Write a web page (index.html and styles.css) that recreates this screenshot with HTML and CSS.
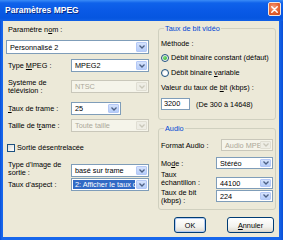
FILE: index.html
```html
<!DOCTYPE html>
<html>
<head>
<meta charset="utf-8">
<link rel="stylesheet" href="styles.css">
</head>
<body>
<div class="window">
  <div class="titlebar">
    <span class="title">Paramètres MPEG</span>
    <span class="close"><svg width="7" height="7" viewBox="0 0 7 7"><path d="M0.8 0.8L6.2 6.2M6.2 0.8L0.8 6.2" stroke="#fff" stroke-width="1.5" stroke-linecap="round"/></svg></span>
  </div>
  <div class="client">
    <div class="left">
      <div class="lbl l-nom">Paramètre n<u>o</u>m :</div>
      <div class="combo c-nom"><span class="val">Personnalisé 2</span><span class="arr"><svg width="6" height="4" viewBox="0 0 6 4"><path d="M0.5 0.5L3 3L5.5 0.5" fill="none" stroke="#4d6185" stroke-width="1.3"/></svg></span></div>

      <div class="row r-mpeg">
        <div class="lbl rl">Type <u>M</u>PEG :</div>
        <div class="combo wide"><span class="val">MPEG2</span><span class="arr"><svg width="6" height="4" viewBox="0 0 6 4"><path d="M0.5 0.5L3 3L5.5 0.5" fill="none" stroke="#4d6185" stroke-width="1.3"/></svg></span></div>
      </div>
      <div class="row r-tv">
        <div class="lbl rl two">Système de<br>télévision :</div>
        <div class="combo wide disabled"><span class="val">NTSC</span><span class="arr"><svg width="6" height="4" viewBox="0 0 6 4"><path d="M0.5 0.5L3 3L5.5 0.5" fill="none" stroke="#c9c7ba" stroke-width="1.3"/></svg></span></div>
      </div>
      <div class="row r-trame">
        <div class="lbl rl"><u>T</u>aux de trame :</div>
        <div class="combo narrow"><span class="val">25</span><span class="arr"><svg width="6" height="4" viewBox="0 0 6 4"><path d="M0.5 0.5L3 3L5.5 0.5" fill="none" stroke="#4d6185" stroke-width="1.3"/></svg></span></div>
      </div>
      <div class="row r-taille">
        <div class="lbl rl">Taille de t<u>r</u>ame :</div>
        <div class="combo wide disabled"><span class="val">Toute taille</span><span class="arr"><svg width="6" height="4" viewBox="0 0 6 4"><path d="M0.5 0.5L3 3L5.5 0.5" fill="none" stroke="#c9c7ba" stroke-width="1.3"/></svg></span></div>
      </div>
      <div class="checkrow">
        <span class="check"></span><span class="lbl">Sortie désentrelacée</span>
      </div>
      <div class="row r-type">
        <div class="lbl rl two up">Type d'image de<br>sortie :</div>
        <div class="combo wide"><span class="val">basé sur trame</span><span class="arr"><svg width="6" height="4" viewBox="0 0 6 4"><path d="M0.5 0.5L3 3L5.5 0.5" fill="none" stroke="#4d6185" stroke-width="1.3"/></svg></span></div>
      </div>
      <div class="row r-aspect">
        <div class="lbl rl">Taux d'aspect :</div>
        <div class="combo wide"><span class="val sel">2: Afficher le taux d</span><span class="arr"><svg width="6" height="4" viewBox="0 0 6 4"><path d="M0.5 0.5L3 3L5.5 0.5" fill="none" stroke="#4d6185" stroke-width="1.3"/></svg></span></div>
      </div>
    </div>

    <div class="right">
      <fieldset class="grp g-video">
        <legend>Taux de bit vidéo</legend>
        <div class="lbl g-meth">Méthode :</div>
        <div class="radiorow r1"><span class="radio on"></span><span class="lbl">Débit binaire constant (défaut)</span></div>
        <div class="radiorow r2"><span class="radio"></span><span class="lbl">Débit binaire <u>v</u>ariable</span></div>
        <div class="lbl g-val">Valeur du taux de <u>b</u>it (kbps) :</div>
        <div class="inrow">
          <span class="input">3200</span><span class="lbl range">(De 300 à 14648)</span>
        </div>
      </fieldset>

      <fieldset class="grp g-audio">
        <legend>Audio</legend>
        <div class="arow a-fmt">
          <div class="lbl al">Format Audio :</div>
          <div class="combo afmt disabled"><span class="val">Audio MPEG</span><span class="arr"><svg width="6" height="4" viewBox="0 0 6 4"><path d="M0.5 0.5L3 3L5.5 0.5" fill="none" stroke="#c9c7ba" stroke-width="1.3"/></svg></span></div>
        </div>
        <div class="arow a-mode">
          <div class="lbl al">Mo<u>d</u>e :</div>
          <div class="combo acmb"><span class="val">Stéréo</span><span class="arr"><svg width="6" height="4" viewBox="0 0 6 4"><path d="M0.5 0.5L3 3L5.5 0.5" fill="none" stroke="#4d6185" stroke-width="1.3"/></svg></span></div>
        </div>
        <div class="arow2 a-ech">
          <div class="lbl al two2">Taux<br>échantillon :</div>
          <div class="combo acmb c-ech"><span class="val">44100</span><span class="arr"><svg width="6" height="4" viewBox="0 0 6 4"><path d="M0.5 0.5L3 3L5.5 0.5" fill="none" stroke="#4d6185" stroke-width="1.3"/></svg></span></div>
        </div>
        <div class="arow2 a-bit">
          <div class="lbl al two2">Taux de bit<br>(kbps) :</div>
          <div class="combo acmb c-bit"><span class="val">224</span><span class="arr"><svg width="6" height="4" viewBox="0 0 6 4"><path d="M0.5 0.5L3 3L5.5 0.5" fill="none" stroke="#4d6185" stroke-width="1.3"/></svg></span></div>
        </div>
      </fieldset>

      <div class="buttons">
        <span class="btn ok">OK</span>
        <span class="btn cancel"><u>A</u>nnuler</span>
      </div>
    </div>
  </div>
</div>
</body>
</html>
```

FILE: styles.css
```css
* { box-sizing: border-box; }
html, body { margin: 0; padding: 0; }
body {
  width: 283px;
  height: 240px;
  overflow: hidden;
  font-family: "Liberation Sans", Arial, sans-serif;
  font-size: 7.3px;
  color: #000;
  background: #0a5ae6;
}
u { text-decoration: underline; text-underline-offset: 1px; }

.window {
  width: 283px;
  height: 240px;
  display: flex;
  flex-direction: column;
  padding: 0 4px 3px 3px;
  background: linear-gradient(90deg, #0a4fd6 0px, #1767ec 2px, #1767ec 279px, #0a4fd6 283px);
}
.titlebar {
  height: 21px;
  margin: 0 -4px 0 -3px;
  padding: 0 5px 0 5px;
  display: flex;
  align-items: center;
  justify-content: space-between;
  background: linear-gradient(#3b8cf7 0px, #0f62ea 3px, #0a5ae6 10px, #0656e0 18px, #1160e6 21px);
}
.title {
  color: #fff;
  font-weight: bold;
  font-size: 8.5px;
  text-shadow: 1px 1px 0 #0a2c86;
  margin-top: -1px;
}
.close {
  width: 13px;
  height: 14px;
  margin-top: -3px;
  margin-right: -3px;
  border: 1px solid #f2e6e0;
  border-radius: 2px;
  background: radial-gradient(circle at 40% 35%, #f59a7a 0%, #e4622f 55%, #c8421c 100%);
  display: flex;
  align-items: center;
  justify-content: center;
}

.client {
  flex: 1;
  background: #ece9d8;
  display: flex;
  padding: 0 3px 0 3px;
}
.left {
  width: 143px;
  display: flex;
  flex-direction: column;
}
.right {
  width: 118px;
  margin-left: 9px;
  display: flex;
  flex-direction: column;
}
.lbl { line-height: 9px; white-space: nowrap; }
.lbl.two { line-height: 7.5px; }
.lbl.two2 { line-height: 8px; }

.l-nom { margin-top: 4px; padding-left: 2px; }

.combo {
  height: 13px;
  display: flex;
  align-items: stretch;
  background: #fff;
  border: 1px solid #7f9db9;
  padding: 1px;
}
.combo .val {
  flex: 1;
  padding-left: 2px;
  line-height: 9px;
  display: flex;
  align-items: center;
  white-space: nowrap;
  overflow: hidden;
}
.combo .val.sel {
  background: #316ac5;
  color: #fff;
  margin-right: 1px;
}
.combo .arr {
  width: 11px;
  flex: none;
  border-radius: 1px;
  background: linear-gradient(#d5e2fc, #b6cdf9);
  border: 1px solid #b4c8f6;
  display: flex;
  align-items: center;
  justify-content: center;
}
.combo.disabled { background: #f5f4ea; border-color: #c9c7ba; }
.combo.disabled .val { color: #aca899; }
.combo.disabled .arr { background: #eeede5; border-color: #e0ded3; }

.c-nom { height: 14px; margin-top: 6px; }

.row {
  display: flex;
  align-items: center;
  height: 13px;
}
.rl { width: 65px; padding-left: 2px; }
.combo.wide { width: 78px; }
.combo.narrow { width: 50px; }
.r-mpeg { margin-top: 5px; }
.r-tv { margin-top: 8px; }
.r-trame { margin-top: 9px; }
.r-taille { margin-top: 4px; }
.checkrow {
  display: flex;
  align-items: center;
  height: 9px;
  margin-top: 11px;
  padding-left: 1px;
}
.check {
  width: 8px;
  height: 8px;
  border: 1px solid #1c5180;
  background: linear-gradient(135deg, #dcdcd7, #fff);
  margin-right: 2px;
}
.r-type { margin-top: 12px; }
.up { margin-top: -4px; line-height: 8px; }
.r-aspect { margin-top: 1px; }

.grp {
  margin: 0;
  padding: 0 2px 0 2px;
  border: 1px solid #d0d0bf;
  border-radius: 3px;
  min-width: 0;
}
.grp legend {
  padding: 0 1px;
  margin-left: 3px;
  color: #0046d5;
  line-height: 9px;
}
.g-video { margin-top: 3px; height: 96px; }
.g-meth { margin-top: 6px; }
.radiorow {
  display: flex;
  align-items: center;
  height: 9px;
}
.r1 { margin-top: 5px; }
.r2 { margin-top: 6px; }
.radio {
  width: 8px;
  height: 8px;
  flex: none;
  border-radius: 50%;
  border: 1px solid #1c5180;
  background: radial-gradient(circle at 60% 60%, #fff 30%, #dcdbd5 100%);
  margin-right: 2px;
  display: flex;
  align-items: center;
  justify-content: center;
}
.radio.on::after {
  content: "";
  width: 4px;
  height: 4px;
  border-radius: 50%;
  background: radial-gradient(circle at 35% 35%, #7de07d, #21a121);
}
.g-val { margin-top: 6px; }
.inrow {
  display: flex;
  align-items: center;
  margin-top: 6px;
  height: 12px;
}
.input {
  width: 29px;
  height: 12px;
  background: #fff;
  border: 1px solid #7f9db9;
  padding-left: 2px;
  line-height: 10px;
}
.range { margin-left: 6px; }

.g-audio { margin-top: 4px; height: 86px; }
.arow {
  display: flex;
  align-items: center;
  justify-content: space-between;
  height: 12px;
}
.arow2 {
  display: flex;
  align-items: flex-start;
  justify-content: space-between;
}
.a-fmt { margin-top: 6px; }
.a-mode { margin-top: 6px; }
.a-ech { margin-top: 2px; }
.a-bit { margin-top: 0; }
.combo.afmt { width: 52px; height: 12px; }
.combo.acmb { width: 57px; height: 12px; }
.c-ech { margin-top: 6px; }
.c-bit { margin-top: 1px; }

.buttons {
  display: flex;
  justify-content: flex-end;
  margin-top: 7px;
  padding-right: 2px;
}
.btn {
  height: 16px;
  border: 1px solid #003c74;
  border-radius: 3px;
  background: linear-gradient(#ffffff, #f3f3ef 60%, #e2dfd6 90%, #d6d0c5);
  display: flex;
  align-items: center;
  justify-content: center;
}
.btn.ok { width: 32px; box-shadow: inset 0 0 0 1px #b3cbf3; }
.btn.cancel { width: 47px; margin-left: 21px; }
```
